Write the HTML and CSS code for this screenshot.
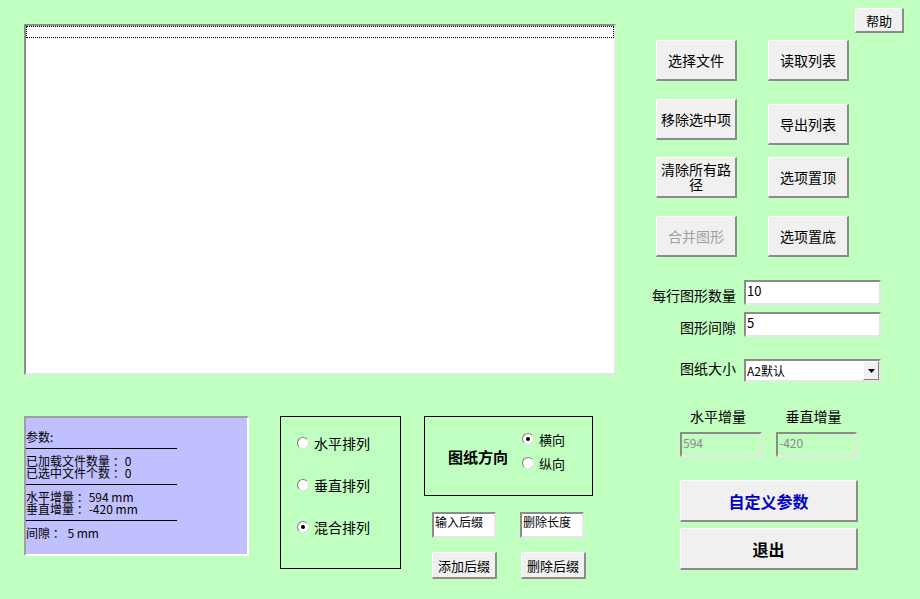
FILE: index.html
```html
<!DOCTYPE html>
<html lang="zh-CN">
<head>
    <meta charset="UTF-8">
    <meta name="viewport" content="width=device-width, initial-scale=1.0">
    <title>图形合并排列</title>
    <link rel="stylesheet" href="styles.css">
</head>
<body>
    <div class="form">
        <div class="left">
            <div class="listbox">
                <div class="focus-row"></div>
            </div>
            <div class="bottom">
                <div class="info">
                    <div class="info-line">参数:</div>
                    <div class="info-rule"></div>
                    <div class="info-line">已加载文件数量 ：0</div>
                    <div class="info-line">已选中文件个数 ：0</div>
                    <div class="info-rule"></div>
                    <div class="info-line">水平增量 ：594 mm</div>
                    <div class="info-line">垂直增量 ：-420 mm</div>
                    <div class="info-rule"></div>
                    <div class="info-line">间隙 ： 5 mm</div>
                </div>
                <div class="layout-group">
                    <div class="radio-item"><span class="radio"></span>水平排列</div>
                    <div class="radio-item"><span class="radio"></span>垂直排列</div>
                    <div class="radio-item"><span class="radio checked"></span>混合排列</div>
                </div>
                <div class="extra">
                    <div class="orient">
                        <div class="orient-title">图纸方向</div>
                        <div class="orient-options">
                            <div class="radio-item small"><span class="radio checked"></span>横向</div>
                            <div class="radio-item small"><span class="radio"></span>纵向</div>
                        </div>
                    </div>
                    <div class="suffix-row">
                        <div class="textbox small-box">输入后缀</div>
                        <div class="textbox small-box">删除长度</div>
                    </div>
                    <div class="suffix-row buttons">
                        <button class="btn small-btn">添加后缀</button>
                        <button class="btn small-btn">删除后缀</button>
                    </div>
                </div>
            </div>
        </div>

        <div class="right">
            <div class="help-row">
                <button class="btn help">帮助</button>
            </div>
            <div class="btn-cols">
                <div class="btn-col col-a">
                    <button class="btn cmd">选择文件</button>
                    <button class="btn cmd">移除选中项</button>
                    <button class="btn cmd two-line">清除所有路<br>径</button>
                    <button class="btn cmd" disabled>合并图形</button>
                </div>
                <div class="btn-col col-b">
                    <button class="btn cmd">读取列表</button>
                    <button class="btn cmd">导出列表</button>
                    <button class="btn cmd">选项置顶</button>
                    <button class="btn cmd">选项置底</button>
                </div>
            </div>
            <div class="params">
                <label class="param-label">每行图形数量</label>
                <div class="textbox param-box">10</div>
                <label class="param-label">图形间隙</label>
                <div class="textbox param-box">5</div>
                <label class="param-label select-label">图纸大小</label>
                <div class="select">
                    <span class="select-value">A2默认</span>
                    <span class="select-arrow">
                        <svg width="7" height="4" viewBox="0 0 7 4"><path d="M0 0h7L3.5 4z" fill="#000"/></svg>
                    </span>
                </div>
            </div>
            <div class="incr">
                <div class="incr-item">
                    <div class="incr-label">水平增量</div>
                    <div class="textbox incr-box">594</div>
                </div>
                <div class="incr-item second">
                    <div class="incr-label">垂直增量</div>
                    <div class="textbox incr-box">-420</div>
                </div>
            </div>
            <div class="big-btns">
                <button class="btn big blue">自定义参数</button>
                <button class="btn big">退出</button>
            </div>
        </div>
    </div>
</body>
</html>
```

FILE: styles.css
```css
body {
    margin: 0;
    padding: 0;
    background-color: #c0ffc0;
    font-family: "Noto Sans CJK SC", "Liberation Sans", sans-serif;
    font-size: 14px;
    color: #000;
}

.form {
    display: flex;
    width: 920px;
    height: 599px;
    overflow: hidden;
}

/* ---------- left side ---------- */

.left {
    padding: 24px 0 0 24px;
}

.listbox {
    box-sizing: border-box;
    width: 592px;
    height: 351px;
    background-color: #fff;
    border: 2px solid;
    border-color: #8c8c8c #e6e6e6 #e6e6e6 #8c8c8c;
    padding: 0;
}

.focus-row {
    height: 10px;
    border: 1px dotted #000;
}

.bottom {
    display: flex;
    align-items: flex-start;
    margin-top: 41px;
}

.info {
    box-sizing: border-box;
    width: 225px;
    height: 140px;
    background-color: #c0c0ff;
    border: 2px solid;
    border-color: #a0a0a0 #fff #fff #a0a0a0;
    padding-top: 13px;
    font-size: 12px;
}

.info-line {
    line-height: 12px;
    height: 12px;
    white-space: nowrap;
}

.info-rule {
    width: 151px;
    height: 1px;
    background-color: #000;
    margin: 5px 0 6px;
}

.layout-group {
    box-sizing: border-box;
    width: 121px;
    height: 153px;
    margin-left: 31px;
    border: 1px solid #000;
    padding: 17px 0 0 16px;
}

.radio-item {
    display: flex;
    align-items: center;
    height: 18px;
    margin-bottom: 24px;
    font-size: 14px;
}

.radio-item.small {
    font-size: 13px;
    margin-bottom: 6px;
}

.radio {
    box-sizing: border-box;
    position: relative;
    width: 12px;
    height: 12px;
    margin-right: 5px;
    border-radius: 50%;
    background-color: #fff;
    border: 1px solid;
    border-color: #808080 #e0e0e0 #e0e0e0 #808080;
}

.radio.checked::after {
    content: "";
    position: absolute;
    left: 3px;
    top: 3px;
    width: 4px;
    height: 4px;
    border-radius: 50%;
    background-color: #000;
}

.extra {
    margin-left: 23px;
}

.orient {
    box-sizing: border-box;
    display: flex;
    align-items: center;
    width: 169px;
    height: 80px;
    border: 1px solid #000;
}

.orient-title {
    font-size: 15px;
    font-weight: bold;
    margin-left: 23px;
}

.orient-options {
    margin-left: 14px;
    margin-top: -4px;
}

.suffix-row {
    display: flex;
    gap: 24px;
    margin-top: 16px;
    margin-left: 8px;
}

.suffix-row.buttons {
    margin-top: 14px;
}

.textbox {
    box-sizing: border-box;
    background-color: #fff;
    border: 2px solid;
    border-color: #8c8c8c #e6e6e6 #e6e6e6 #8c8c8c;
    font-size: 12px;
    line-height: 14px;
    padding: 1px 0 0 1px;
    white-space: nowrap;
    overflow: hidden;
}

.small-box {
    width: 64px;
    height: 26px;
}

/* ---------- buttons ---------- */

.btn {
    box-sizing: border-box;
    margin: 0;
    padding: 0;
    background-color: #f0f0f0;
    border-style: solid;
    border-width: 1px 2px 2px 1px;
    border-color: #fff #8c8c8c #8c8c8c #fff;
    font-family: "Noto Sans CJK SC", "Liberation Sans", sans-serif;
    font-size: 14px;
    color: #000;
    cursor: pointer;
}

.btn:disabled {
    color: #a0a0a0;
}

.small-btn {
    width: 65px;
    height: 27px;
    font-size: 13px;
}

/* ---------- right side ---------- */

.right {
    width: 304px;
    padding-top: 8px;
}

.help-row {
    display: flex;
    justify-content: flex-end;
    padding-right: 16px;
}

.help {
    width: 49px;
    height: 25px;
    font-size: 13px;
}

.btn-cols {
    display: flex;
    gap: 31px;
    padding-left: 40px;
    margin-top: 7px;
}

.btn-col {
    display: flex;
    flex-direction: column;
}

.cmd {
    width: 81px;
    height: 41px;
    line-height: 15px;
}

.col-a .cmd + .cmd {
    margin-top: 18px;
}

.col-a .cmd:nth-child(3) {
    margin-top: 17px;
}

.col-b .cmd:nth-child(2) {
    margin-top: 23px;
}

.col-b .cmd:nth-child(3) {
    margin-top: 12px;
}

.col-b .cmd:nth-child(4) {
    margin-top: 18px;
}

.params {
    display: grid;
    grid-template-columns: 120px 137px;
    grid-template-rows: 25px 25px 38px;
    column-gap: 8px;
    row-gap: 7px;
    margin-top: 23px;
}

.param-label {
    align-self: center;
    text-align: right;
    line-height: 20px;
    padding-top: 5px;
    white-space: nowrap;
}

.param-box {
    height: 25px;
    font-size: 13px;
    padding-top: 2px;
}

.select-label {
    align-self: end;
    padding-top: 0;
    margin-bottom: 4px;
}

.select {
    box-sizing: border-box;
    align-self: end;
    display: flex;
    align-items: center;
    height: 23px;
    background-color: #fff;
    border: 2px solid;
    border-color: #8c8c8c #e6e6e6 #e6e6e6 #8c8c8c;
    font-size: 12px;
}

.select-value {
    flex: 1;
    padding-left: 1px;
}

.select-arrow {
    box-sizing: border-box;
    display: flex;
    align-items: center;
    justify-content: center;
    width: 16px;
    height: 19px;
    background-color: #f0f0f0;
    border: 1px solid;
    border-color: #fff #808080 #808080 #fff;
}

.incr {
    display: flex;
    gap: 14px;
    padding-left: 64px;
    margin-top: 26px;
}

.incr-label {
    text-align: center;
    font-size: 14px;
    height: 16px;
    line-height: 16px;
    padding-right: 6px;
    margin-bottom: 8px;
}

.incr-box {
    width: 82px;
    height: 25px;
    background-color: transparent;
    color: #8a8a8a;
    padding-top: 2px;
}

.incr-item.second .incr-box {
    width: 81px;
}

.big-btns {
    display: flex;
    flex-direction: column;
    gap: 6px;
    padding-left: 64px;
    margin-top: 23px;
}

.big {
    width: 178px;
    height: 42px;
    font-size: 16px;
    font-weight: bold;
}

.big.blue {
    color: #0000c8;
}
```
